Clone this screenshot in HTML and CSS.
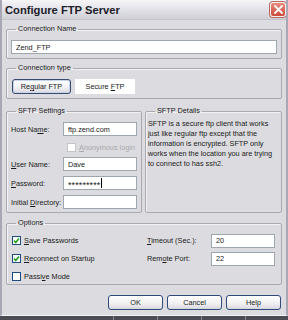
FILE: index.html
```html
<!DOCTYPE html>
<html lang="en">
<head>
  <meta charset="UTF-8">
  <title>Configure FTP Server</title>
  <link rel="stylesheet" href="styles.css">
</head>
<body>
  <div class="window">
    <header class="titlebar">
      <span class="title">Configure FTP Server</span>
      <span class="close">
        <svg width="9" height="9" viewBox="0 0 9 9"><path d="M1 1L8 8M8 1L1 8" stroke="#fff" stroke-width="1.8" stroke-linecap="round"/></svg>
      </span>
    </header>

    <main class="content">
      <fieldset class="group">
        <legend>Connection Name</legend>
        <input class="field field-wide" type="text" value="Zend_FTP">
      </fieldset>

      <fieldset class="group">
        <legend>Connection type</legend>
        <div class="type-row">
          <button class="btn">Re<u>g</u>ular FTP</button>
          <span class="tab"><span>Secure <u>F</u>TP</span></span>
        </div>
      </fieldset>

      <div class="split">
        <fieldset class="group">
          <legend>SFTP Settings</legend>
          <div class="form">
            <label>Host Na<u>m</u>e:</label>
            <input class="field" type="text" value="ftp.zend.com">
            <span></span>
            <span class="check-line disabled"><span class="box"></span><span><u>A</u>nonymous login</span></span>
            <label><u>U</u>ser Name:</label>
            <input class="field" type="text" value="Dave">
            <label><u>P</u>assword:</label>
            <span class="field pass">*********<span class="caret"></span></span>
            <label>Initial <u>D</u>irectory:</label>
            <input class="field" type="text" value="">
          </div>
        </fieldset>

        <fieldset class="group">
          <legend>SFTP Details</legend>
          <p class="details">SFTP is a secure ftp client that works just like regular ftp except that the information is encrypted. SFTP only works when the location you are trying to connect to has ssh2.</p>
        </fieldset>
      </div>

      <fieldset class="group group-options">
        <legend>Options</legend>
        <div class="options">
          <span class="check-line"><span class="box checked"></span><span><u>S</u>ave Passwords</span></span>
          <label><u>T</u>imeout (Sec.):</label>
          <input class="field" type="text" value="20">
          <span class="check-line"><span class="box checked"></span><span><u>R</u>econnect on Startup</span></span>
          <label>Rem<u>o</u>te Port:</label>
          <input class="field" type="text" value="22">
          <span class="check-line"><span class="box"></span><span>Passi<u>v</u>e Mode</span></span>
        </div>
      </fieldset>

      <div class="actions">
        <button class="btn">OK</button>
        <button class="btn">Cancel</button>
        <button class="btn">Help</button>
      </div>
    </main>
  </div>
  <div class="taskbar">
    <span></span><span></span><span></span><span></span>
  </div>
</body>
</html>
```

FILE: styles.css
```css
:root {
  --face: #dcdce0;
  --edge: #a9a9b0;
  --text: #1a1a1a;
  --input-border: #9ea6b0;
}

* {
  margin: 0;
  padding: 0;
  box-sizing: border-box;
}

body {
  width: 288px;
  height: 320px;
  overflow: hidden;
  background: #4c4c54;
  font-family: "Liberation Sans", Arial, sans-serif;
  font-size: 7.3px;
  color: var(--text);
}

.window {
  height: 316px;
  overflow: hidden;
  background: var(--face);
  border-left: 2px solid #a8a8b4;
  border-right: 2px solid #a8a8b4;
  border-bottom: 1px solid #f4f4f6;
}

.titlebar {
  height: 20px;
  display: flex;
  align-items: center;
  justify-content: space-between;
  padding: 0 0 0 3px;
  background: linear-gradient(#f6f6f8, #e4e4ea 45%, #cfcfd6);
  border-bottom: 1px solid #c4c4cc;
}

.title {
  font-size: 11.2px;
  font-weight: bold;
  color: #202028;
}

.close {
  width: 16px;
  height: 15px;
  display: flex;
  align-items: center;
  justify-content: center;
  background: linear-gradient(#e88a7c, #cf4a3c);
  border: 1px solid #f4f0f0;
  border-radius: 3px;
  box-shadow: 0 0 0 1px #b86a60;
}

.content {
  padding: 4px 4px 0;
}

.group {
  border: 1px solid var(--edge);
  border-radius: 2px;
  box-shadow: inset 1px 1px 0 #f2f2f4;
  padding: 6px 4px 4px;
  margin-bottom: 4px;
}

.group legend {
  margin-left: 5px;
  padding: 0 2px;
  line-height: 10px;
}

.field {
  display: block;
  height: 14px;
  width: 74px;
  border: 1px solid var(--input-border);
  background: #fff;
  font-family: inherit;
  font-size: 7.3px;
  color: var(--text);
  padding: 0 4px;
  outline: none;
}

.field-wide {
  width: 100%;
}

.type-row {
  display: flex;
  gap: 4px;
  padding-left: 1px;
}

.btn {
  height: 15px;
  width: 55px;
  font-family: inherit;
  font-size: 7.3px;
  color: var(--text);
  border: 1px solid #2f4a78;
  border-radius: 3px;
  background: linear-gradient(#ffffff, #f0f0f2 60%, #d6d6de);
}

.type-row .btn {
  width: 59px;
  border-color: #3a4a6a;
  box-shadow: inset 0 0 0 1px #c8d4ec;
}

.tab {
  width: 60px;
  height: 15px;
  background: #fff;
  display: flex;
  align-items: center;
  justify-content: center;
}

.split {
  display: grid;
  grid-template-columns: 136px 1fr;
  gap: 3px;
  margin-top: 7px;
}

.split .group {
  margin-bottom: 5px;
  padding-bottom: 3px;
}

.form {
  display: grid;
  grid-template-columns: 52px 74px;
  align-items: center;
  row-gap: 5px;
}

.form .check-line {
  margin: 2px 0 0 4px;
}

.pass {
  display: flex;
  align-items: center;
  padding-top: 3px;
  font-size: 9px;
  letter-spacing: 0.1px;
}

.caret {
  width: 1px;
  height: 10px;
  background: #000;
  margin-left: 1px;
  margin-top: -3px;
}

.details {
  line-height: 10px;
  margin: -3px 0 0 -2px;
  height: 90px;
}

.check-line {
  display: flex;
  align-items: center;
  gap: 3px;
  white-space: nowrap;
}

.box {
  width: 9px;
  height: 9px;
  flex-shrink: 0;
  border: 1px solid #1c4c80;
  background: #fff;
}

.box.checked {
  background: #fff url("data:image/svg+xml,%3Csvg xmlns='http://www.w3.org/2000/svg' width='7' height='7'%3E%3Cpath d='M1 3.5L2.8 5.5L6 1.5' fill='none' stroke='%2321a121' stroke-width='1.6'/%3E%3C/svg%3E") no-repeat center;
}

.disabled {
  color: #a8a8ac;
}

.disabled .box {
  border-color: #c4c4c8;
}

.group-options {
  padding-bottom: 1px;
}

.options {
  display: grid;
  grid-template-columns: 135px 64px 64px;
  grid-auto-rows: 13px;
  row-gap: 5px;
  align-items: center;
  padding-left: 1px;
}

.options .field {
  width: 64px;
  height: 14px;
}

.actions {
  display: flex;
  justify-content: flex-end;
  gap: 4px;
  margin-top: 10px;
  padding-right: 1px;
}

.taskbar {
  height: 4px;
  display: flex;
  gap: 1px;
  padding-left: 113px;
}

.taskbar span {
  width: 59px;
  border-left: 1px solid #8a8a92;
}
```
